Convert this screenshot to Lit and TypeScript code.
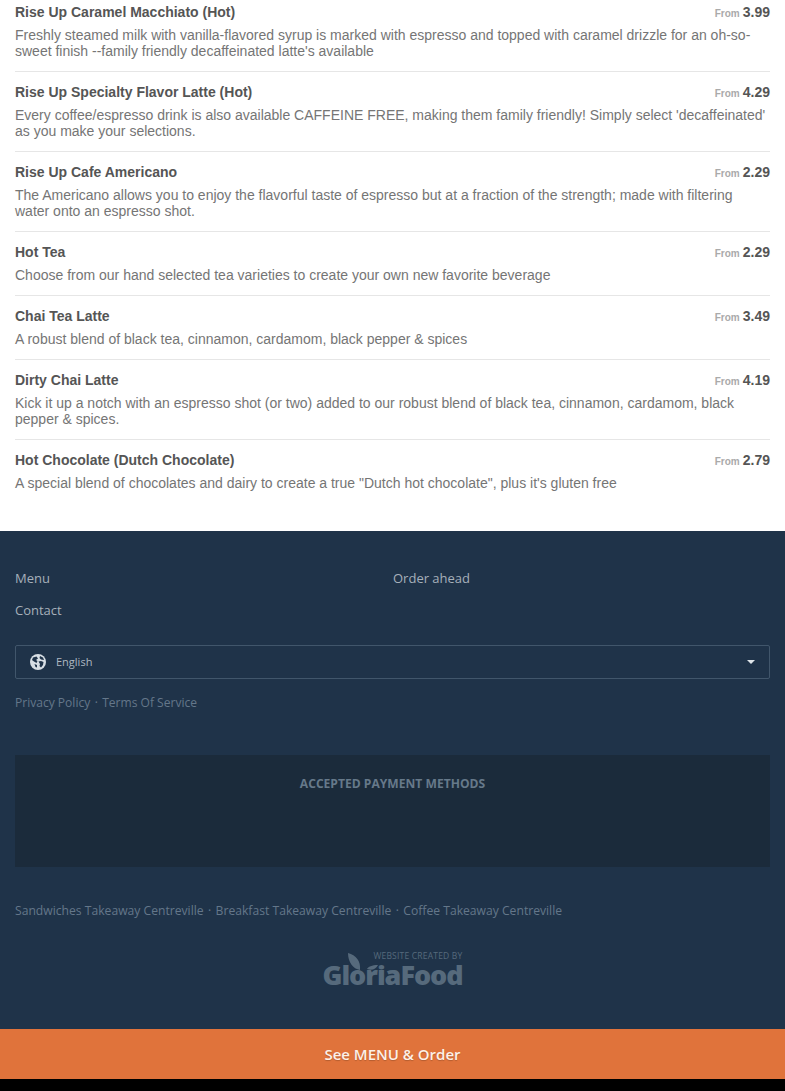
import { LitElement, html, css } from "lit";
import { customElement } from "lit/decorators.js";

const items = [
  ["Rise Up Caramel Macchiato (Hot)", "3.99", "Freshly steamed milk with vanilla-flavored syrup is marked with espresso and topped with caramel drizzle for an oh-so-sweet finish --family friendly decaffeinated latte's available"],
  ["Rise Up Specialty Flavor Latte (Hot)", "4.29", "Every coffee/espresso drink is also available CAFFEINE FREE, making them family friendly! Simply select 'decaffeinated' as you make your selections."],
  ["Rise Up Cafe Americano", "2.29", "The Americano allows you to enjoy the flavorful taste of espresso but at a fraction of the strength; made with filtering water onto an espresso shot."],
  ["Hot Tea", "2.29", "Choose from our hand selected tea varieties to create your own new favorite beverage"],
  ["Chai Tea Latte", "3.49", "A robust blend of black tea, cinnamon, cardamom, black pepper & spices"],
  ["Dirty Chai Latte", "4.19", "Kick it up a notch with an espresso shot (or two) added to our robust blend of black tea, cinnamon, cardamom, black pepper & spices."],
  ["Hot Chocolate (Dutch Chocolate)", "2.79", "A special blend of chocolates and dairy to create a true \"Dutch hot chocolate\", plus it's gluten free"],
];

@customElement("app-root")
export class AppRoot extends LitElement {
  static styles = css`
    :host { display: block; height: 1091px; overflow: hidden; background: #000; font-family: "Liberation Sans", Arial, sans-serif; }
    .list { background: #fff; margin-top: -8px; padding: 0 15px 28px; }
    .row { padding: 12px 0; border-bottom: 1px solid #e6e6e6; }
    .row:last-child { border-bottom: 0; }
    .head { display: flex; justify-content: space-between; align-items: baseline; height: 16px; line-height: 16px; margin-bottom: 7px; }
    .name { font-size: 14px; font-weight: 700; color: #555; }
    .price { font-size: 14px; font-weight: 700; color: #555; }
    .from { font-size: 10px; color: #aaa; margin-right: 3px; }
    .desc { font-size: 14px; line-height: 16px; color: #757575; }
    footer { background: #1f3349; height: 498px; padding: 0 15px; box-sizing: border-box; font-family: "Open Sans", sans-serif; display: flex; flex-direction: column; }
    .nav { display: grid; grid-template-columns: 378px 1fr; padding-top: 38px; row-gap: 14px; font-size: 13px; line-height: 18px; color: #a6b0ba; }
    .select { margin-top: 26px; height: 34px; box-sizing: border-box; border: 1px solid #41566b; border-radius: 2px; display: flex; align-items: center; padding: 0 14px 1px; font-size: 11px; color: #aeb8c2; }
    .globe { width: 16px; height: 16px; margin-right: 10px; }
    .caret { margin-left: auto; width: 0; height: 0; border: 4px solid transparent; border-top-color: #dfe5ea; border-bottom: 0; }
    .legal { margin-top: 15px; font-size: 12.05px; line-height: 18px; color: #64778a; display: flex; gap: 4.4px; }
    .links { margin-top: 35px; font-size: 12.15px; }
    .pay { margin-top: 43px; height: 112px; background: #1b2b3b; text-align: center; font-size: 12.1px; font-weight: 700; line-height: 18px; padding-top: 20px; box-sizing: border-box; color: #66798a; }
    .logo { align-self: center; margin-top: 30px; width: 142px; height: 40px; padding-top: 1px; box-sizing: border-box; color: #566a7c; position: relative; }
    .made { font-size: 8.5px; line-height: 10px; text-align: right; letter-spacing: 0.2px; padding-right: 1px; }
    .brand { font-weight: 800; font-size: 27px; line-height: 26px; letter-spacing: -1.05px; white-space: nowrap; margin-top: 1px; padding-left: 1px; }
    .leaf { position: absolute; left: 26px; top: 3px; width: 30px; height: 20px; }
    .cta { height: 50px; background: #e0733b; color: #fdf1e8; display: flex; align-items: center; justify-content: center; font-family: "Open Sans", sans-serif; font-size: 15px; font-weight: 600; text-shadow: 0 1px 1px rgba(0,0,0,.2); }
  `;

  render() {
    return html`
      <div class="list">
        ${items.map(([n, p, d]) => html`
          <div class="row">
            <div class="head"><span class="name">${n}</span><span class="price"><span class="from">From</span>${p}</span></div>
            <div class="desc">${d}</div>
          </div>`)}
      </div>
      <footer>
        <div class="nav"><span>Menu</span><span>Order ahead</span><span>Contact</span></div>
        <div class="select">
          <svg class="globe" viewBox="0 0 16 16"><circle cx="8" cy="8" r="8" fill="#d8dfe5"/><path d="M3 3.5 6.5 2.5 8 4.5 6 6 7.5 7 6.5 9 4 7.5 2 6ZM10 2 13 3.5 14 6 11 5.5 9.5 4ZM8.5 7.5 11 7 13.5 8 13 11 11 13.5 9.5 12 10 10ZM4.5 10 7 11 7 13.5 5.5 13Z" fill="#1f3349"/></svg>
          <span>English</span><span class="caret"></span>
        </div>
        <div class="legal"><span>Privacy Policy</span><span>·</span><span>Terms Of Service</span></div>
        <div class="pay">ACCEPTED PAYMENT METHODS</div>
        <div class="legal links"><span>Sandwiches Takeaway Centreville</span><span>·</span><span>Breakfast Takeaway Centreville</span><span>·</span><span>Coffee Takeaway Centreville</span></div>
        <div class="logo">
          <div class="made">WEBSITE CREATED BY</div>
          <svg class="leaf" viewBox="0 0 30 20"><path d="M0 0C8 2 13 8 12 17 5 16 0 9 0 0ZM19 16C20 14 24 12 30 12 28 16 24 18 19 16Z" fill="#566a7c"/></svg>
          <div class="brand">GloriaFood</div>
        </div>
      </footer>
      <div class="cta">See MENU &amp; Order</div>
    `;
  }
}
